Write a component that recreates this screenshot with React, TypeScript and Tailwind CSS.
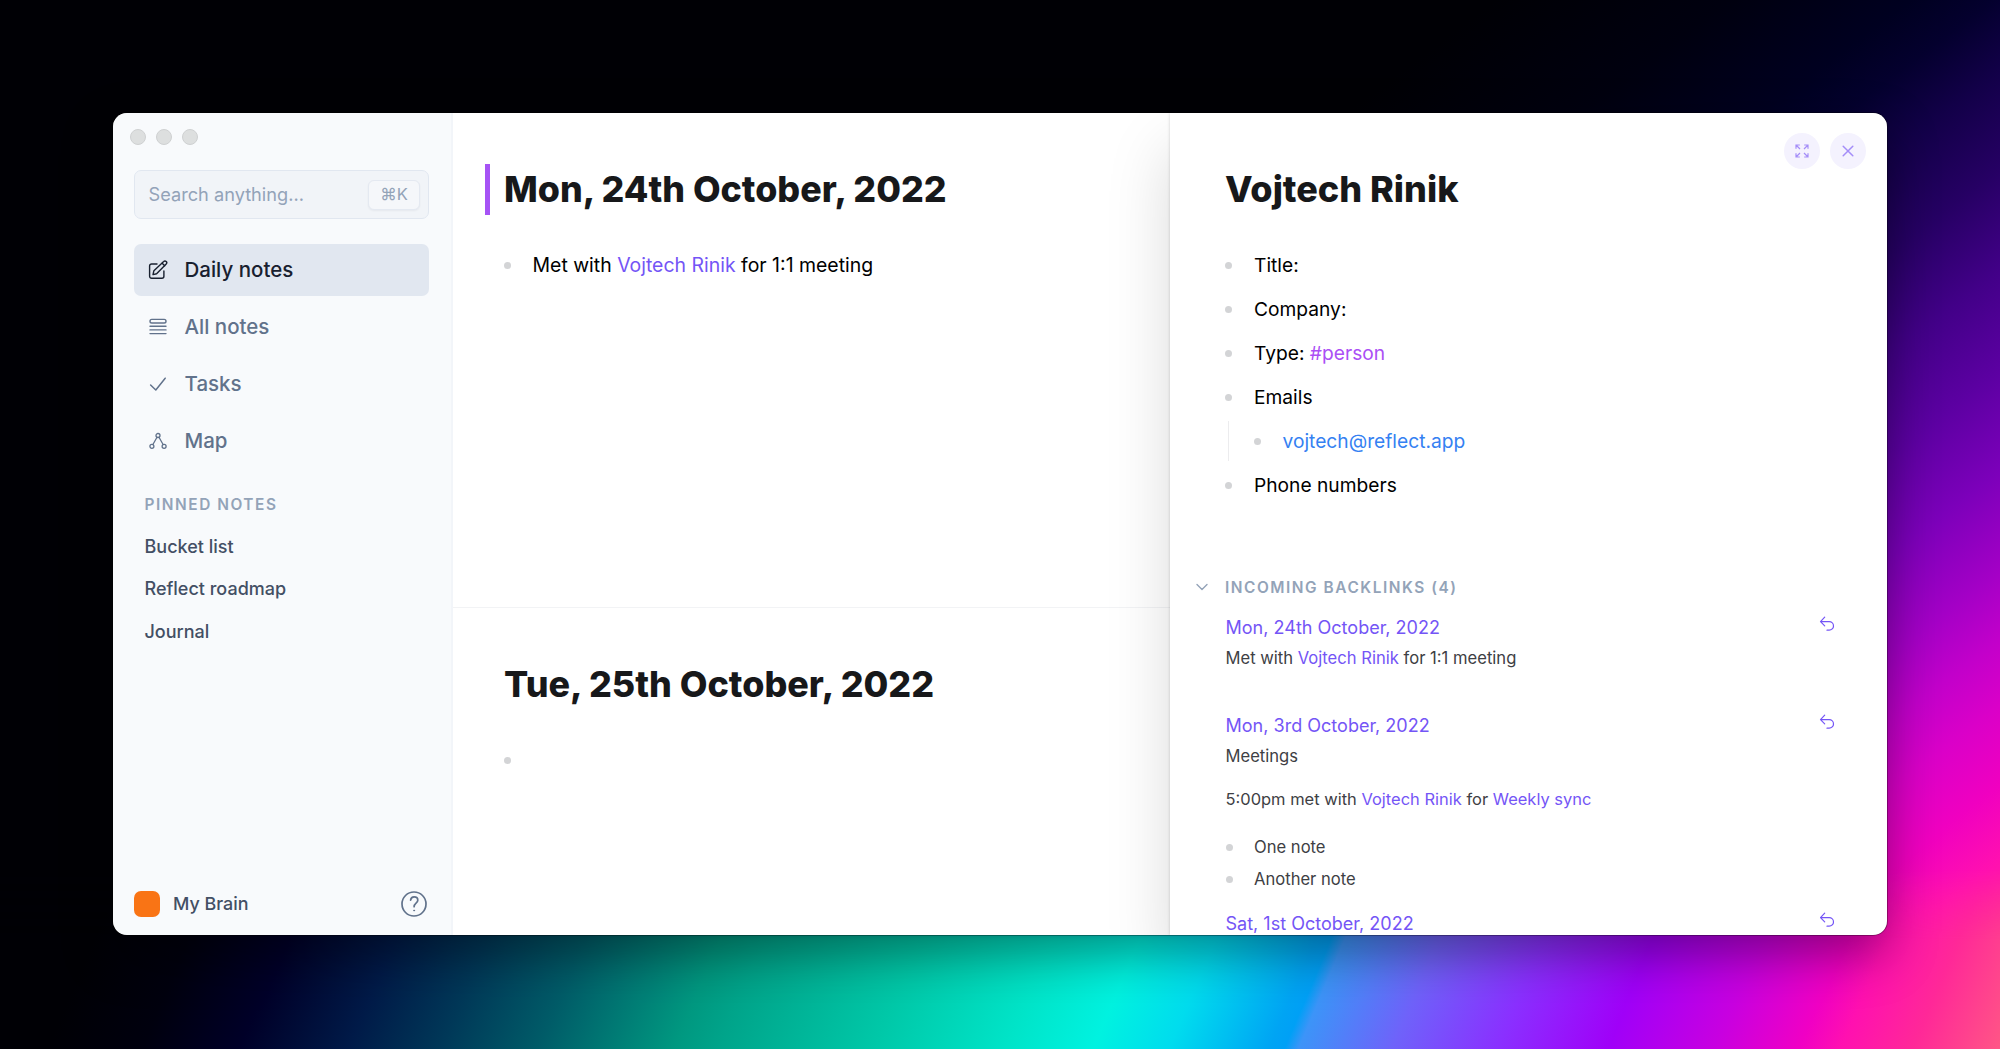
import type { ReactNode } from 'react';

function Bullet() {
  return <span className="size-[7px] shrink-0 rounded-full bg-[#d3d4d6]" />;
}

function Link({ children }: { children: ReactNode }) {
  return <span className="text-[#7455f6]">{children}</span>;
}

function EditIcon() {
  return (
    <svg viewBox="0 0 20 20" className="size-5" fill="none" stroke="currentColor" strokeWidth="1.4" strokeLinecap="round" strokeLinejoin="round">
      <path d="M9 4H3.6A2 2 0 0 0 1.6 6v10.3a2 2 0 0 0 2 2h10.3a2 2 0 0 0 2-2V11" />
      <path d="M5 14.6l.9-3.9L15.7 1.6a1.7 1.7 0 0 1 2.5 2.5L8.6 13.7z" />
      <path d="M14.2 3.2l2.5 2.5" />
    </svg>
  );
}

function StackIcon() {
  return (
    <svg viewBox="0 0 20 20" className="size-5" fill="none" stroke="currentColor" strokeWidth="1.4" strokeLinecap="round">
      <rect x="2" y="2.4" width="16" height="3.6" rx="1.8" />
      <path d="M2 9.3h16M2 12.9h16M2 16.6h16" />
    </svg>
  );
}

function CheckIcon() {
  return (
    <svg viewBox="0 0 20 20" className="size-5" fill="none" stroke="currentColor" strokeWidth="1.5" strokeLinecap="round" strokeLinejoin="round">
      <path d="M2.6 11l5.2 5L17.2 4.2" />
    </svg>
  );
}

function MapIcon() {
  return (
    <svg viewBox="0 0 20 20" className="size-5" fill="none" stroke="currentColor" strokeWidth="1.3" strokeLinecap="round">
      <circle cx="10" cy="4.5" r="2" />
      <circle cx="3.9" cy="15.3" r="2" />
      <circle cx="16.1" cy="15.3" r="2" />
      <path d="M9 6.3L4.9 13.5M11 6.3L15.1 13.5" />
    </svg>
  );
}

function HelpIcon() {
  return (
    <svg viewBox="0 0 26 26" className="size-[26px]" fill="none" stroke="currentColor" strokeWidth="1.7" strokeLinecap="round" strokeLinejoin="round">
      <circle cx="13" cy="13" r="12" />
      <path d="M9.6 9.2C9.9 7 11.3 5.9 13.1 5.9c2.1 0 3.7 1.4 3.7 3.3 0 3-3.7 3-3.7 6.5" />
      <circle cx="13.1" cy="19.5" r=".5" fill="currentColor" strokeWidth="1" />
    </svg>
  );
}

function ExpandIcon() {
  return (
    <svg viewBox="0 0 14 14" className="size-[14px]" fill="none" stroke="currentColor" strokeWidth="1.2">
      <path d="M1 4.8V1h3.8M1 1l4 4M9.2 1H13v3.8M13 1L9 5M1 9.2V13h3.8M1 13l4-4M13 9.2V13H9.2M13 13L9 9" />
    </svg>
  );
}

function CloseIcon() {
  return (
    <svg viewBox="0 0 14 14" className="size-[14px]" fill="none" stroke="currentColor" strokeWidth="1.5" strokeLinecap="round">
      <path d="M2.2 2.2l9.6 9.6M11.8 2.2l-9.6 9.6" />
    </svg>
  );
}

function ReplyIcon() {
  return (
    <svg viewBox="0 0 16 16" className="size-4" fill="none" stroke="currentColor" strokeWidth="1.2" strokeLinecap="round" strokeLinejoin="round">
      <path d="M5.7 1.2L1.5 5.6l4.2 4.2M1.5 5.6h8.700a4.2 4.2 0 0 1 0 8.6H8" />
    </svg>
  );
}

function NavItem({ icon, label, active = false }: { icon: ReactNode; label: string; active?: boolean }) {
  return (
    <a className={`flex h-[52px] items-center gap-[16.5px] rounded-[7px] pl-[14px] text-[20.5px] font-medium ${active ? 'bg-[#e1e7f0] text-[#18202f]' : 'text-[#61728b]'}`}>
      {icon}
      {label}
    </a>
  );
}

function Sidebar() {
  return (
    <aside className="flex w-[340px] shrink-0 flex-col border-r-2 border-[#f2f5f9] bg-[#f8fafc] pr-[22px] pl-[21px]">
      <div className="-ml-1 flex gap-[10px] pt-4">
        <span className="size-4 rounded-full border border-[#cfd1d2] bg-[#dddfdf]" />
        <span className="size-4 rounded-full border border-[#cfd1d2] bg-[#dddfdf]" />
        <span className="size-4 rounded-full border border-[#cfd1d2] bg-[#dddfdf]" />
      </div>
      <div className="mt-[25px] flex h-[49px] items-center justify-between rounded-[7px] border-[1.5px] border-[#e1e7f0] bg-[#f1f4f8] pr-2 pl-[13.5px] text-[18.2px] text-[#93a3b8]">
        Search anything...
        <kbd className="flex h-[30px] w-[52px] items-center justify-center rounded-md border border-[#e4e9f1] bg-[#f5f7fa] font-['Inter'] text-[16.5px] shadow-[0_1px_2px_rgba(15,23,42,0.05)]">⌘K</kbd>
      </div>
      <nav className="mt-[25.4px] flex flex-col gap-[4.9px]">
        <NavItem icon={<EditIcon />} label="Daily notes" active />
        <NavItem icon={<StackIcon />} label="All notes" />
        <NavItem icon={<CheckIcon />} label="Tasks" />
        <NavItem icon={<MapIcon />} label="Map" />
      </nav>
      <div className="mt-[25.5px] pl-[10.5px]">
        <h2 className="h-6 text-[15.4px] leading-6 font-semibold tracking-[1.55px] text-[#93a3b8]">PINNED NOTES</h2>
        <ul className="mt-[9px] text-[18px] leading-[42.5px] font-medium text-[#434f64]">
          <li>Bucket list</li>
          <li>Reflect roadmap</li>
          <li>Journal</li>
        </ul>
      </div>
      <footer className="mt-auto flex items-center pr-[2px] pb-[17px] text-[17.9px] font-medium text-[#434f64]">
        <span className="size-[26px] rounded-[7px] bg-[#f97415]" />
        <span className="ml-[13px] pt-px">My Brain</span>
        <span className="ml-auto text-[#61728b]">
          <HelpIcon />
        </span>
      </footer>
    </aside>
  );
}

function DailyNotes() {
  return (
    <main className="flex w-[717px] shrink-0 flex-col">
      <section className="h-[495px] border-b border-[#f2f3f5]">
        <div className="mt-[51px] ml-8 flex h-[51px] items-center border-l-[5px] border-[#a653f5] pl-[14px]">
          <h1 className="text-[35.8px] font-extrabold whitespace-nowrap text-[#17181a]">Mon, 24th October, 2022</h1>
        </div>
        <div className="mt-[29px] ml-[51px] flex h-[43px] items-center gap-[21.5px] text-[19.45px] text-black">
          <Bullet />
          <p>
            Met with <Link>Vojtech Rinik</Link> for 1:1 meeting
          </p>
        </div>
      </section>
      <section className="pl-[51px]">
        <h1 className="mt-[51px] h-[51px] text-[35.9px] leading-[51px] font-extrabold whitespace-nowrap text-[#17181a]">Tue, 25th October, 2022</h1>
        <div className="mt-[28px] flex h-[44px] items-center">
          <Bullet />
        </div>
      </section>
    </main>
  );
}

function Field({ children }: { children: ReactNode }) {
  return (
    <li className="flex h-[44px] items-center gap-[22px]">
      <Bullet />
      <span>{children}</span>
    </li>
  );
}

function BacklinkTitle({ children }: { children: ReactNode }) {
  return (
    <div className="flex h-[30px] items-center justify-between text-[18.05px] text-[#7455f6]">
      <span>{children}</span>
      <span className="mb-[9px]">
        <ReplyIcon />
      </span>
    </div>
  );
}

function ContactPanel() {
  return (
    <aside className="relative h-full w-[717px] shrink-0 bg-white pl-[55px] shadow-[0_36px_60px_rgba(0,0,0,0.15),0_0_3px_rgba(0,0,0,0.18)]">
      <div className="absolute top-5 right-[21px] flex gap-[10px] text-[#a48df8]">
        <button className="flex size-9 items-center justify-center rounded-full bg-[#f4f2fe]">
          <ExpandIcon />
        </button>
        <button className="flex size-9 items-center justify-center rounded-full bg-[#f4f2fe]">
          <CloseIcon />
        </button>
      </div>
      <h1 className="mt-[51px] h-[51px] text-[36px] leading-[51px] font-extrabold text-[#17181a]">Vojtech Rinik</h1>
      <ul className="mt-[28px] text-[19.2px] text-black">
        <Field>Title:</Field>
        <Field>Company:</Field>
        <Field>
          Type: <span className="text-[#ab4ff5]">#person</span>
        </Field>
        <Field>Emails</Field>
        <ul className="ml-[3px] flex h-[44px] items-center">
          <li className="flex h-10 items-center gap-[22px] border-l border-[#ececee] pl-[24.5px]">
            <Bullet />
            <span className="text-[#3581f2]">vojtech@reflect.app</span>
          </li>
        </ul>
        <Field>Phone numbers</Field>
      </ul>
      <div className="mt-[68px] -ml-7 flex h-6 items-center gap-[18px] text-[#93a3b8]">
        <svg viewBox="0 0 10 6" className="h-[6px] w-[10px] overflow-visible" fill="none" stroke="currentColor" strokeWidth="1.4" strokeLinecap="round" strokeLinejoin="round">
          <path d="M0 .5l5 5 5-5" />
        </svg>
        <h2 className="pt-px text-[15.4px] font-semibold tracking-[1.55px]">INCOMING BACKLINKS (4)</h2>
      </div>
      <div className="mt-[14px] mr-[52px] pl-[0.5px] text-[16.6px] text-[#3e4044]">
        <BacklinkTitle>Mon, 24th October, 2022</BacklinkTitle>
        <p className="h-[30px] leading-[30px]">
          Met with <Link>Vojtech Rinik</Link> for 1:1 meeting
        </p>
        <div className="mt-[38px]">
          <BacklinkTitle>Mon, 3rd October, 2022</BacklinkTitle>
        </div>
        <p className="h-[30px] leading-[30px]">Meetings</p>
        <p className="mt-[13px] h-[30px] text-[16.48px] leading-[30px]">
          5:00pm met with <Link>Vojtech Rinik</Link> for <Link>Weekly sync</Link>
        </p>
        <ul className="mt-[17px]">
          <li className="flex h-[32px] items-center gap-[21.5px]">
            <Bullet />
            <span>One note</span>
          </li>
          <li className="flex h-[32px] items-center gap-[21.5px]">
            <Bullet />
            <span>Another note</span>
          </li>
        </ul>
        <div className="mt-[14px]">
          <BacklinkTitle>Sat, 1st October, 2022</BacklinkTitle>
        </div>
      </div>
    </aside>
  );
}

export default function App() {
  return (
    <div className="relative h-[1049px] w-[2000px] overflow-hidden bg-[linear-gradient(143deg,#000005_900px,#00000f_1040px,#000020_1150px,#04002e_1200px,#120048_1259px,#260064_1339px,#420088_1420px,#5c00a2_1500px,#7c00ba_1580px,#a400c6_1660px,#c200ca_1714px,#da00c8_1767px,#f000c0_1831px,#ff10b0_1890px,#ff2898_1950px,#ff4688_2010px,#ff5a84_2041px)] pt-[113px] pl-[113px] font-['Inter',sans-serif]">
      <div className="absolute inset-0 bg-[linear-gradient(113deg,#000005_453px,#00000e_540px,#000028_630px,#001a48_730px,#003858_815px,#005c68_906px,#009880_1030px,#00a48a_1070px,#00c8a8_1214px,#00e4c8_1336px,#00f2e0_1416px,#00dcee_1486px,#00a4f4_1578px,#00a0f6_1592px,#3c94f8_1605px,#6f62fa_1692px,#8a30ff_1788px,#a000f8_1890px,#c800e0_1988px,#f000c4_2066px,#ff10b0_2104px,#ff2898_2170px,#ff5a84_2258px)] [mask-image:linear-gradient(to_bottom,transparent_870px,black_940px)]" />
      <div className="relative flex h-[822px] w-[1774px] overflow-hidden rounded-[14px] bg-white">
        <Sidebar />
        <DailyNotes />
        <ContactPanel />
      </div>
      <div className="pointer-events-none absolute top-[113px] left-[113px] h-[822px] w-[1774px] rounded-[14px] shadow-[0_0_0_1px_rgba(0,0,0,0.3),0_20px_50px_rgba(0,0,0,0.38)]" />
    </div>
  );
}
